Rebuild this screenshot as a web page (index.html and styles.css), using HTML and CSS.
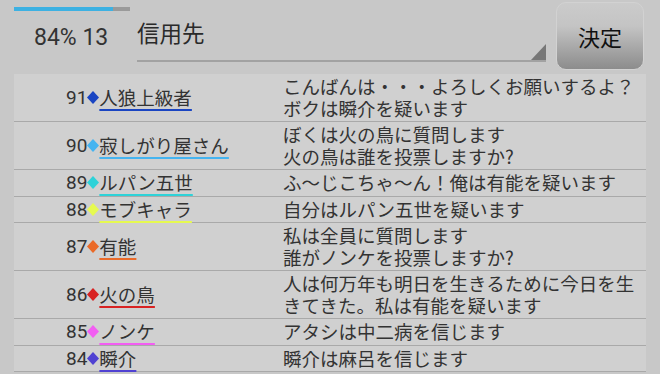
FILE: index.html
```html
<!DOCTYPE html>
<html lang="ja">
<head>
<meta charset="utf-8">
<link rel="stylesheet" href="styles.css">
</head>
<body>
<div class="top">
  <div class="status">
    <div class="progress"><div class="progress-fill" style="width:99px"></div></div>
    <div class="count">84% 13</div>
  </div>
  <div class="spinner">
    <span class="spinner-text">信用先</span>
    <svg class="spinner-arrow" width="15" height="16" viewBox="0 0 15 16"><polygon points="0,16 15,16 15,0" fill="#777"/></svg>
  </div>
  <div class="button">決定</div>
</div>
<div class="list">
  <div class="row">
    <div class="who"><span class="num">91</span><svg class="dia" width="12" height="13" viewBox="0 0 12 13"><polygon points="6,0 12,6.5 6,13 0,6.5" fill="#1a45c2"/></svg><span class="name" style="text-decoration-color:#1a45c2">人狼上級者</span></div>
    <div class="msg">こんばんは・・・よろしくお願いするよ？<br>ボクは瞬介を疑います</div>
  </div>
  <div class="row">
    <div class="who"><span class="num">90</span><svg class="dia" width="12" height="13" viewBox="0 0 12 13"><polygon points="6,0 12,6.5 6,13 0,6.5" fill="#45b4f0"/></svg><span class="name" style="text-decoration-color:#45b4f0">寂しがり屋さん</span></div>
    <div class="msg">ぼくは火の鳥に質問します<br>火の鳥は誰を投票しますか?</div>
  </div>
  <div class="row">
    <div class="who"><span class="num">89</span><svg class="dia" width="12" height="13" viewBox="0 0 12 13"><polygon points="6,0 12,6.5 6,13 0,6.5" fill="#2ed2d8"/></svg><span class="name" style="text-decoration-color:#2ed2d8">ルパン五世</span></div>
    <div class="msg">ふ～じこちゃ～ん！俺は有能を疑います</div>
  </div>
  <div class="row">
    <div class="who"><span class="num">88</span><svg class="dia" width="12" height="13" viewBox="0 0 12 13"><polygon points="6,0 12,6.5 6,13 0,6.5" fill="#e6fa50"/></svg><span class="name" style="text-decoration-color:#e6fa50">モブキャラ</span></div>
    <div class="msg">自分はルパン五世を疑います</div>
  </div>
  <div class="row">
    <div class="who"><span class="num">87</span><svg class="dia" width="12" height="13" viewBox="0 0 12 13"><polygon points="6,0 12,6.5 6,13 0,6.5" fill="#ea6a28"/></svg><span class="name" style="text-decoration-color:#ea6a28">有能</span></div>
    <div class="msg">私は全員に質問します<br>誰がノンケを投票しますか?</div>
  </div>
  <div class="row">
    <div class="who"><span class="num">86</span><svg class="dia" width="12" height="13" viewBox="0 0 12 13"><polygon points="6,0 12,6.5 6,13 0,6.5" fill="#d82222"/></svg><span class="name" style="text-decoration-color:#d82222">火の鳥</span></div>
    <div class="msg">人は何万年も明日を生きるために今日を生<br>きてきた。私は有能を疑います</div>
  </div>
  <div class="row">
    <div class="who"><span class="num">85</span><svg class="dia" width="12" height="13" viewBox="0 0 12 13"><polygon points="6,0 12,6.5 6,13 0,6.5" fill="#f25ef2"/></svg><span class="name" style="text-decoration-color:#f25ef2">ノンケ</span></div>
    <div class="msg">アタシは中二病を信じます</div>
  </div>
  <div class="row">
    <div class="who"><span class="num">84</span><svg class="dia" width="12" height="13" viewBox="0 0 12 13"><polygon points="6,0 12,6.5 6,13 0,6.5" fill="#5042d2"/></svg><span class="name" style="text-decoration-color:#5042d2">瞬介</span></div>
    <div class="msg">瞬介は麻呂を信じます</div>
  </div>
</div>
</body>
</html>
```

FILE: styles.css
```css
html, body {
  margin: 0;
  padding: 0;
}
body {
  width: 660px;
  height: 374px;
  overflow: hidden;
  background: #c8c8c8;
  font-family: Roboto, "Noto Sans CJK JP", sans-serif;
  color: #333;
}
.top {
  display: flex;
  align-items: flex-start;
  height: 74px;
  padding-left: 14px;
  box-sizing: border-box;
}
.status {
  width: 123px;
  padding-top: 7px;
}
.progress {
  width: 116px;
  height: 4px;
  background: #9a9a9a;
  display: flex;
}
.progress-fill {
  height: 4px;
  background: #3db1e2;
}
.count {
  margin-top: 14px;
  padding-left: 20px;
  font-size: 23px;
  line-height: 26px;
  color: #333;
}
.spinner {
  width: 409px;
  height: 62px;
  box-sizing: border-box;
  border-bottom: 2px solid #a2a2a2;
  display: flex;
  align-items: flex-start;
}
.spinner-text {
  padding-top: 21px;
  font-family: "Noto Sans CJK JP", sans-serif;
  font-size: 22.5px;
  line-height: 22px;
  color: #2a2a2a;
}
.spinner-arrow {
  margin-left: auto;
  align-self: flex-end;
  display: block;
}
.button {
  margin-top: 2px;
  margin-left: 10px;
  width: 88px;
  height: 68px;
  box-sizing: border-box;
  border-radius: 10px;
  border: 1px solid #d2d2d2;
  background: linear-gradient(to bottom, #cbcbcb 0%, #c4c4c4 35%, #8c8c8c 100%);
  display: flex;
  align-items: center;
  justify-content: center;
  font-family: "Noto Sans CJK JP", sans-serif;
  font-size: 22px;
  color: #111;
}
.list {
  margin: 0 14px;
  background: #d0d0d0;
}
.row {
  display: grid;
  grid-template-columns: 269px 1fr;
  border-bottom: 1px solid #a9a9a9;
}
.who {
  display: flex;
  align-items: center;
  padding-left: 52px;
  font-size: 18.5px;
}
.num {
  font-family: Roboto, sans-serif;
  font-size: 19px;
  color: #333;
}
.dia {
  display: block;
  flex: none;
}
.name {
  font-family: "Noto Sans CJK JP", sans-serif;
  font-size: 18.5px;
  line-height: 21.5px;
  text-decoration-line: underline;
  text-decoration-thickness: 2px;
  text-underline-offset: 4px;
  color: #333;
}
.msg {
  padding: 2px 0;
  font-family: "Noto Sans CJK JP", sans-serif;
  font-size: 18.5px;
  line-height: 21.5px;
  color: #333;
  white-space: nowrap;
}
```
